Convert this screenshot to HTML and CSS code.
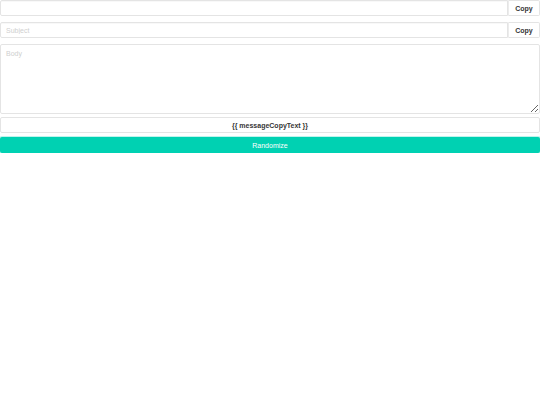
FILE: index.html
```html
<!DOCTYPE html>
<html>
<head>
<meta charset="utf-8">
<link rel="stylesheet" href="styles.css">
</head>
<body>
<div class="app">
  <div class="field">
    <input class="input" type="text">
    <button class="addon">Copy</button>
  </div>
  <div class="field">
    <input class="input" type="text" placeholder="Subject">
    <button class="addon">Copy</button>
  </div>
  <textarea class="body" placeholder="Body"></textarea>
  <button class="copy-msg">{{ messageCopyText }}</button>
  <button class="randomize">Randomize</button>
</div>
</body>
</html>
```
FILE: styles.css
```css
html, body {
  margin: 0;
  padding: 0;
  background: #fff;
}
body {
  font-family: "Liberation Sans", Arial, sans-serif;
  font-size: 7px;
  color: #363636;
}
.app {
  display: flex;
  flex-direction: column;
  width: 540px;
}
.field {
  display: flex;
  height: 16px;
  margin-bottom: 6px;
}
.input {
  flex: 1;
  min-width: 0;
  box-sizing: border-box;
  height: 16px;
  margin: 0;
  padding: 0 5px;
  border: 1px solid #e4e4e4;
  border-radius: 2px 0 0 2px;
  font-family: inherit;
  font-size: 7px;
  color: #363636;
  outline: none;
  box-shadow: inset 0 1px 1px rgba(10,10,10,0.03);
}
.input::placeholder, .body::placeholder {
  color: #cfcfcf;
}
.addon {
  width: 32px;
  box-sizing: border-box;
  height: 16px;
  margin: 0;
  padding: 0;
  border: 1px solid #e4e4e4;
  border-left: 1px solid #ececec;
  border-radius: 0 2px 2px 0;
  background: #fff;
  font-family: inherit;
  font-size: 7px;
  font-weight: bold;
  color: #363636;
}
.body {
  box-sizing: border-box;
  width: 540px;
  height: 70px;
  margin: 0 0 3px 0;
  padding: 5px 5px;
  border: 1px solid #e4e4e4;
  border-radius: 2px;
  font-family: inherit;
  font-size: 7px;
  color: #363636;
  outline: none;
  display: block;
}
.copy-msg {
  box-sizing: border-box;
  width: 540px;
  height: 16px;
  margin: 0 0 4px 0;
  padding: 0;
  border: 1px solid #e4e4e4;
  border-radius: 2px;
  background: #fff;
  font-family: inherit;
  font-size: 7px;
  font-weight: bold;
  color: #363636;
}
.randomize {
  box-sizing: border-box;
  width: 540px;
  height: 16px;
  margin: 0;
  padding: 0;
  border: 1px solid transparent;
  border-radius: 2px;
  background: #00d1b2;
  color: #fff;
  font-family: inherit;
  font-size: 7px;
  box-shadow: 0 0 0 1px rgba(0,209,178,0.25);
}
```
